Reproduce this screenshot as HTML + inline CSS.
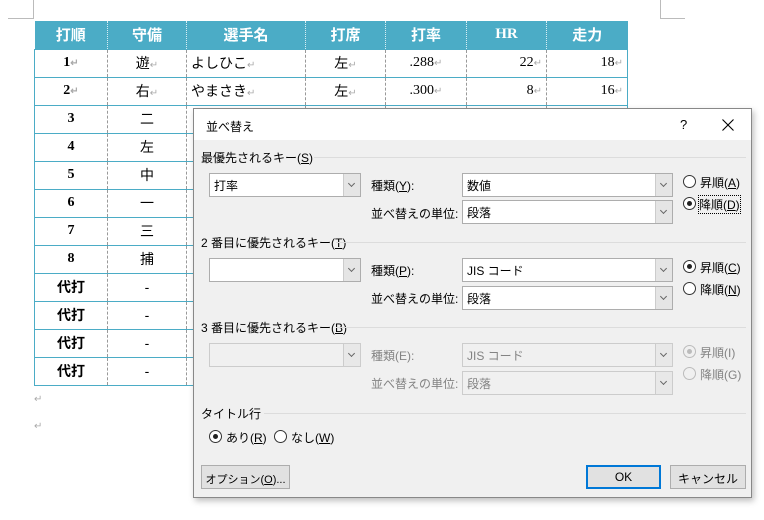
<!DOCTYPE html>
<html><head><meta charset="utf-8"><style>
*{margin:0;padding:0;box-sizing:border-box}
body{width:764px;height:520px;background:#fff;position:relative;overflow:hidden;font-family:"Liberation Sans","Noto Sans CJK JP",sans-serif;font-size:12px;color:#000}
.a{position:absolute;white-space:nowrap}
table{position:absolute;left:34px;top:21px;border-collapse:collapse;table-layout:fixed;font-family:"Liberation Serif","Noto Sans CJK JP",serif;font-size:14px}
td{height:28px;border-top:1px solid #4bacc6;border-bottom:1px solid #4bacc6;border-left:1px dashed #999;text-align:center;padding:0 4px}
td.s{font-family:"Liberation Sans","Noto Sans CJK JP",sans-serif;font-size:14px}
tr td:first-child{border-left:1px solid #4bacc6;font-weight:bold}
tr td:last-child{border-right:1px solid #4bacc6}
th{height:28px;background:#4bacc6;color:#fff;font-weight:bold;border-left:1px dotted #d8eef4;font-size:15px}
th:first-child{border-left:none}
.r{text-align:right}.l{text-align:left}
.pm{color:#aaa;font-size:10px}
.dlg{position:absolute;left:193px;top:108px;width:559px;height:390px;background:#f0f0f0;border:1px solid #888;box-shadow:2px 3px 6px rgba(0,0,0,.25)}
.tb{position:absolute;left:0;top:0;width:557px;height:31px;background:#fff}
.sec{position:absolute;font-size:12px}
.ln{position:absolute;height:1px;background:#dcdcdc}
.cb{position:absolute;height:24px;background:#fff;border:1px solid #adadad;font-size:12px;padding:3px 0 0 4px}
.cb.d{background:#f0f0f0;border-color:#ccc;color:#838383}
.cb i{position:absolute;right:0;top:0;width:17px;height:22px;background:#e5e5e5;border-left:1px solid #ccc}
.cb i:after{content:"";position:absolute;left:5px;top:7px;width:4px;height:4px;border-right:1px solid #666;border-bottom:1px solid #666;transform:rotate(45deg)}
.cb.d i{background:#e8e8e8}
.rd{position:absolute;width:13px;height:13px;border:1px solid #333;border-radius:50%;background:#fff}
.rd.on:after{content:"";position:absolute;left:3px;top:3px;width:5px;height:5px;border-radius:50%;background:#222}
.rd.dis{border-color:#bbb;background:#f0f0f0}
.rd.dis.on:after{background:#bbb}
.g{color:#838383}
.btn{position:absolute;height:24px;background:#e1e1e1;border:1px solid #adadad;text-align:center;font-size:12px;padding-top:4px;white-space:nowrap}
</style></head><body>
<div class="a" style="left:8px;top:18px;width:26px;height:1px;background:#bbb"></div>
<div class="a" style="left:33px;top:0;width:1px;height:19px;background:#bbb"></div>
<div class="a" style="left:660px;top:0;width:1px;height:19px;background:#bbb"></div>
<div class="a" style="left:660px;top:18px;width:25px;height:1px;background:#bbb"></div>
<table>
<colgroup><col style="width:73px"><col style="width:79px"><col style="width:119px"><col style="width:80px"><col style="width:81px"><col style="width:80px"><col style="width:81px"></colgroup>
<tr><th>打順</th><th>守備</th><th>選手名</th><th>打席</th><th>打率</th><th>HR</th><th>走力</th></tr>
<tr><td>1<span class="pm">↵</span></td><td class="s">遊<span class="pm">↵</span></td><td class="l s">よしひこ<span class="pm">↵</span></td><td class="s">左<span class="pm">↵</span></td><td>.288<span class="pm">↵</span></td><td class="r">22<span class="pm">↵</span></td><td class="r">18<span class="pm">↵</span></td></tr>
<tr><td>2<span class="pm">↵</span></td><td class="s">右<span class="pm">↵</span></td><td class="l s">やまさき<span class="pm">↵</span></td><td class="s">左<span class="pm">↵</span></td><td>.300<span class="pm">↵</span></td><td class="r">8<span class="pm">↵</span></td><td class="r">16<span class="pm">↵</span></td></tr>
<tr><td>3</td><td class="s">二</td><td></td><td></td><td></td><td></td><td></td></tr>
<tr><td>4</td><td class="s">左</td><td></td><td></td><td></td><td></td><td></td></tr>
<tr><td>5</td><td class="s">中</td><td></td><td></td><td></td><td></td><td></td></tr>
<tr><td>6</td><td class="s">一</td><td></td><td></td><td></td><td></td><td></td></tr>
<tr><td>7</td><td class="s">三</td><td></td><td></td><td></td><td></td><td></td></tr>
<tr><td>8</td><td class="s">捕</td><td></td><td></td><td></td><td></td><td></td></tr>
<tr><td>代打</td><td class="s">-</td><td></td><td></td><td></td><td></td><td></td></tr>
<tr><td>代打</td><td class="s">-</td><td></td><td></td><td></td><td></td><td></td></tr>
<tr><td>代打</td><td class="s">-</td><td></td><td></td><td></td><td></td><td></td></tr>
<tr><td>代打</td><td class="s">-</td><td></td><td></td><td></td><td></td><td></td></tr>
</table>
<div class="a pm" style="left:34px;top:394px">↵</div>
<div class="a pm" style="left:34px;top:421px">↵</div>

<div class="dlg">
<div class="tb"></div>
<div class="a" style="left:12px;top:9px">並べ替え</div>
<div class="a" style="left:486px;top:8px;font-size:13px">?</div>
<svg class="a" style="left:528px;top:10px" width="12" height="12"><path d="M0.5 0.5L11.5 11.5M11.5 0.5L0.5 11.5" stroke="#000" stroke-width="1.1"/></svg>

<div class="sec" style="left:7px;top:40px">最優先されるキー(<u>S</u>)</div>
<div class="ln" style="left:120px;top:48px;width:432px"></div>
<div class="cb" style="left:15px;top:64px;width:152px">打率<i></i></div>
<div class="a" style="left:177px;top:68px">種類(<u>Y</u>):</div>
<div class="cb" style="left:268px;top:64px;width:211px">数値<i></i></div>
<div class="a" style="left:177px;top:96px">並べ替えの単位:</div>
<div class="cb" style="left:268px;top:91px;width:211px">段落<i></i></div>
<div class="rd" style="left:489px;top:66px"></div><div class="a" style="left:506px;top:65px">昇順(<u>A</u>)</div>
<div class="rd on" style="left:489px;top:88px"></div><div class="a" style="left:505px;top:87px;outline:1px dotted #000">降順(<u>D</u>)</div>

<div class="sec" style="left:7px;top:125px">2 番目に優先されるキー(<u>T</u>)</div>
<div class="ln" style="left:142px;top:133px;width:410px"></div>
<div class="cb" style="left:15px;top:149px;width:152px"><i></i></div>
<div class="a" style="left:177px;top:153px">種類(<u>P</u>):</div>
<div class="cb" style="left:268px;top:149px;width:211px">JIS コード<i></i></div>
<div class="a" style="left:177px;top:181px">並べ替えの単位:</div>
<div class="cb" style="left:268px;top:177px;width:211px">段落<i></i></div>
<div class="rd on" style="left:489px;top:151px"></div><div class="a" style="left:506px;top:150px">昇順(<u>C</u>)</div>
<div class="rd" style="left:489px;top:173px"></div><div class="a" style="left:506px;top:172px">降順(<u>N</u>)</div>

<div class="sec" style="left:7px;top:210px">3 番目に優先されるキー(<u>B</u>)</div>
<div class="ln" style="left:142px;top:218px;width:410px"></div>
<div class="cb d" style="left:15px;top:234px;width:152px;background:#f0f0f0"><i></i></div>
<div class="a g" style="left:177px;top:238px">種類(E):</div>
<div class="cb d" style="left:268px;top:234px;width:211px">JIS コード<i></i></div>
<div class="a g" style="left:177px;top:266px">並べ替えの単位:</div>
<div class="cb d" style="left:268px;top:262px;width:211px">段落<i></i></div>
<div class="rd dis on" style="left:489px;top:236px"></div><div class="a g" style="left:506px;top:235px">昇順(I)</div>
<div class="rd dis" style="left:489px;top:258px"></div><div class="a g" style="left:506px;top:257px">降順(G)</div>

<div class="sec" style="left:7px;top:296px">タイトル行</div>
<div class="ln" style="left:70px;top:304px;width:482px"></div>
<div class="rd on" style="left:15px;top:321px"></div><div class="a" style="left:32px;top:320px">あり(<u>R</u>)</div>
<div class="rd" style="left:80px;top:321px"></div><div class="a" style="left:97px;top:320px">なし(<u>W</u>)</div>

<div class="btn" style="left:7px;top:356px;width:89px;font-size:11px;padding-top:5px">オプション(<u>O</u>)...</div>
<div class="btn" style="left:392px;top:356px;width:75px;border:2px solid #0078d7;padding-top:3px">OK</div>
<div class="btn" style="left:476px;top:356px;width:76px">キャンセル</div>
</div>
</body></html>
